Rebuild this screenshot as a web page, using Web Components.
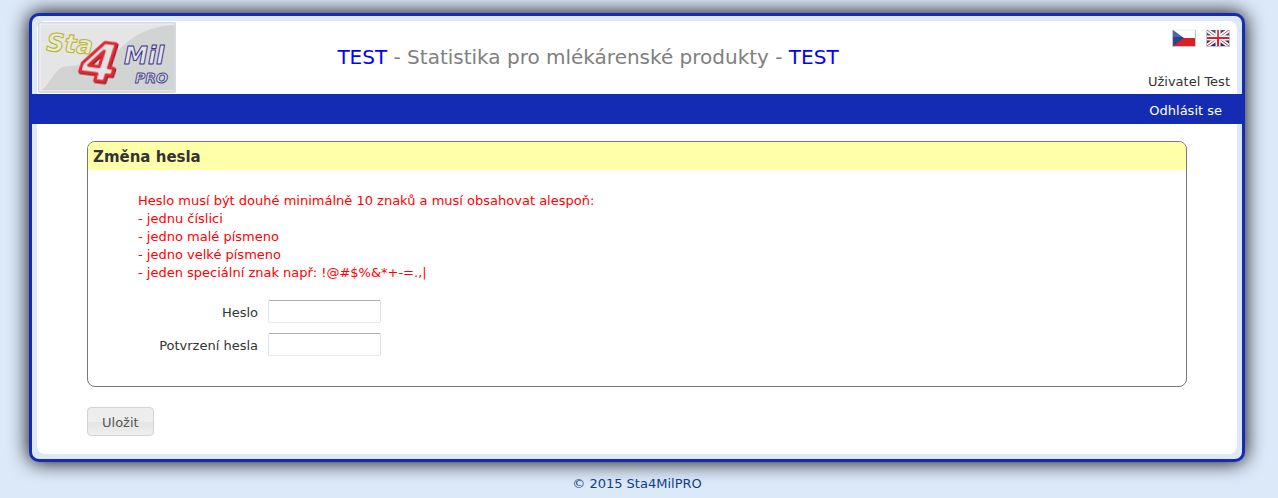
<!DOCTYPE html>
<html lang="cs">
<head>
<meta charset="utf-8">
<title>Sta4MilPRO - Změna hesla</title>
<style>
  body {
    margin: 0;
    background: #dce9f9;
    color: #333;
    font: 13px/18px "DejaVu Sans", Verdana, sans-serif;
  }
</style>
</head>
<body>
<app-frame>
  <app-header slot="header" user="Uživatel Test">
    <sta-logo slot="logo"></sta-logo>
    <flag-link slot="flags" country="cz" label="Čeština"></flag-link>
    <flag-link slot="flags" country="gb" label="English"></flag-link>
  </app-header>
  <menu-bar slot="menu">Odhlásit se</menu-bar>
  <password-form></password-form>
</app-frame>
<app-footer>© 2015 Sta4MilPRO</app-footer>

<script>
class AppFrame extends HTMLElement {
  constructor() {
    super();
    const shadow = this.attachShadow({ mode: 'open' });
    shadow.innerHTML = `
      <style>
        :host {
          display: block;
          margin: 13px 33px 0 29px;
          padding: 5px 0;
          border: 3px solid #142bb3;
          border-radius: 10px;
          background: #dce9f9;
          box-shadow: 0 0 20px #000;
        }
        .top, .content {
          margin: 0 5px;
          background: #fff;
        }
        .top {
          border-radius: 8px 8px 0 0;
        }
        .content {
          padding: 17px 50px 18px;
          border-radius: 0 0 8px 8px;
        }
      </style>
      <div class="top"><slot name="header"></slot></div>
      <slot name="menu"></slot>
      <main class="content"><slot></slot></main>
    `;
  }
}

class AppHeader extends HTMLElement {
  constructor() {
    super();
    const shadow = this.attachShadow({ mode: 'open' });
    shadow.innerHTML = `
      <style>
        :host {
          display: block;
        }
        header {
          display: grid;
          grid-template-columns: 140px 1fr 238px;
          height: 73px;
        }
        h1 {
          margin: 0;
          padding-top: 24px;
          color: #808080;
          font-size: 20px;
          font-weight: normal;
          line-height: 24px;
          text-align: center;
        }
        b {
          color: #00f;
          font-weight: normal;
        }
        .side {
          display: flex;
          flex-direction: column;
          justify-content: space-between;
          align-items: flex-end;
          padding: 8px 7px 3px 0;
        }
        .flags {
          display: flex;
          gap: 10px;
        }
      </style>
      <header>
        <slot name="logo"></slot>
        <h1><b>TEST</b> - Statistika pro mlékárenské produkty - <b>TEST</b></h1>
        <div class="side">
          <div class="flags"><slot name="flags"></slot></div>
          <span class="user"></span>
        </div>
      </header>
    `;
    shadow.querySelector('.user').textContent = this.getAttribute('user');
  }
}

class StaLogo extends HTMLElement {
  constructor() {
    super();
    const shadow = this.attachShadow({ mode: 'open' });
    shadow.innerHTML = `
      <style>
        :host {
          display: block;
          padding: 1px;
        }
        svg {
          display: block;
          overflow: visible;
        }
        text {
          font-family: "DejaVu Sans", sans-serif;
          font-style: italic;
          font-weight: bold;
          stroke-linejoin: round;
        }
        .four {
          filter: drop-shadow(1px 1px 0 #8d1820);
        }
      </style>
      <svg width="138" height="71" viewBox="0 0 138 71" role="img" aria-label="Sta4Mil PRO">
        <rect width="138" height="71" rx="2" fill="#e5e5e5"/>
        <path d="M4 68C14 60 17 44 30 44L48 43C86 40 82 6 137 3V68Z" fill="#d2d4d3"/>
        <rect x="1" y="1" width="136" height="69" rx="1" fill="none" stroke="#d6dadd" stroke-width="2"/>
        <path d="M2 69V2H136" fill="none" stroke="#f3f3f3"/>
        <g transform="rotate(4 10 28)">
          <text x="8" y="29" font-size="25" fill="#e9e9df" stroke="#b9b622" stroke-width="1">Sta</text>
        </g>
        <g class="four" transform="rotate(7 62 40)">
          <text x="43" y="59" font-size="53" fill="#e2e3e3" stroke="#e22632" stroke-width="3">4</text>
        </g>
        <text x="86" y="42" font-size="24" fill="#e3e3e8" stroke="#3a3288" stroke-width="1">Mil</text>
        <text x="97" y="61" font-size="14" fill="#dedee4" stroke="#4a4490" stroke-width="1">PRO</text>
      </svg>
    `;
  }
}

const FLAGS = {
  cz: `
    <rect width="22" height="16" fill="#fff"/>
    <path d="M0 8H22V16H0Z" fill="#dc1f26"/>
    <path d="M0 0L11 8L0 16Z" fill="#24458f"/>
  `,
  gb: `
    <rect width="22" height="16" fill="#20286f"/>
    <path d="M0 0L22 16M22 0L0 16" stroke="#fff" stroke-width="4"/>
    <path d="M0 0L22 16M22 0L0 16" stroke="#d8393f" stroke-width="1"/>
    <path d="M11 0V16M0 8H22" stroke="#fff" stroke-width="5"/>
    <path d="M11 0V16M0 8H22" stroke="#db2027" stroke-width="2"/>
  `
};

class FlagLink extends HTMLElement {
  constructor() {
    super();
    const shadow = this.attachShadow({ mode: 'open' });
    shadow.innerHTML = `
      <style>
        :host {
          display: block;
        }
        a, svg {
          display: block;
        }
      </style>
      <a href="#">
        <svg width="24" height="18" viewBox="-1 -1 24 18">
          <rect x="-1" y="0" width="24" height="17" rx="1" fill="#000" opacity=".2"/>
          <svg width="22" height="16">${FLAGS[this.getAttribute('country')]}</svg>
          <rect width="22" height="7" fill="#fff" opacity=".18"/>
          <rect width="22" height="16" fill="none" stroke="#777" stroke-width="1" opacity=".15"/>
        </svg>
      </a>
    `;
    shadow.querySelector('a').setAttribute('aria-label', this.getAttribute('label'));
  }
}

class MenuBar extends HTMLElement {
  constructor() {
    super();
    const shadow = this.attachShadow({ mode: 'open' });
    shadow.innerHTML = `
      <style>
        :host {
          display: block;
          background: #142bb3;
        }
        nav {
          display: flex;
          justify-content: flex-end;
          padding: 8px 20px 4px;
        }
        a {
          color: #fff;
          text-decoration: none;
        }
        a:hover {
          text-decoration: underline;
        }
      </style>
      <nav><a href="#"><slot></slot></a></nav>
    `;
  }
}

class PasswordForm extends HTMLElement {
  constructor() {
    super();
    const shadow = this.attachShadow({ mode: 'open' });
    shadow.innerHTML = `
      <style>
        :host {
          display: block;
        }
        section {
          border: 1px solid #777;
          border-radius: 8px;
          overflow: hidden;
        }
        h2 {
          margin: 0;
          padding: 6px 5px 4px;
          background: #ffffaa;
          font-size: 15px;
          line-height: 18px;
        }
        .body {
          padding: 22px 50px 30px;
        }
        .rules {
          margin: 0 0 18px;
          color: #f00;
        }
        .fields {
          display: grid;
          grid-template-columns: 120px 113px;
          gap: 10px;
          align-items: center;
        }
        label {
          padding-top: 2px;
          text-align: right;
          white-space: nowrap;
        }
        input {
          box-sizing: border-box;
          width: 100%;
          height: 23px;
          padding: 1px 3px;
          border: 1px solid #e3e9ef;
          border-color: #abadb3 #dbdfe6 #e3e9ef #e2e3ea;
          border-radius: 2px;
          background: #fff;
          font: inherit;
        }
        button {
          display: block;
          height: 29px;
          margin-top: 20px;
          padding: 2px 14px 0;
          border: 1px solid #d3d3d3;
          border-radius: 4px;
          background: linear-gradient(#ededed 50%, #e3e3e3 50%, #efefef);
          color: #555;
          font: inherit;
          cursor: pointer;
        }
        button:hover {
          border-color: #999;
          color: #212121;
        }
      </style>
      <form>
        <section>
          <h2>Změna hesla</h2>
          <div class="body">
            <p class="rules">
              Heslo musí být douhé minimálně 10 znaků a musí obsahovat alespoň:<br>
              - jednu číslici<br>
              - jedno malé písmeno<br>
              - jedno velké písmeno<br>
              - jeden speciální znak např: !@#$%&amp;*+-=.,|
            </p>
            <div class="fields">
              <label for="password">Heslo</label>
              <input type="password" id="password">
              <label for="confirm">Potvrzení hesla</label>
              <input type="password" id="confirm">
            </div>
          </div>
        </section>
        <button type="submit">Uložit</button>
      </form>
    `;
    shadow.querySelector('form').addEventListener('submit', e => e.preventDefault());
  }
}

class AppFooter extends HTMLElement {
  constructor() {
    super();
    const shadow = this.attachShadow({ mode: 'open' });
    shadow.innerHTML = `
      <style>
        :host {
          display: block;
          padding: 13px 33px 5px 29px;
          color: #0f3e88;
          text-align: center;
        }
      </style>
      <footer><slot></slot></footer>
    `;
  }
}

customElements.define('app-frame', AppFrame);
customElements.define('app-header', AppHeader);
customElements.define('sta-logo', StaLogo);
customElements.define('flag-link', FlagLink);
customElements.define('menu-bar', MenuBar);
customElements.define('password-form', PasswordForm);
customElements.define('app-footer', AppFooter);
</script>
</body>
</html>
